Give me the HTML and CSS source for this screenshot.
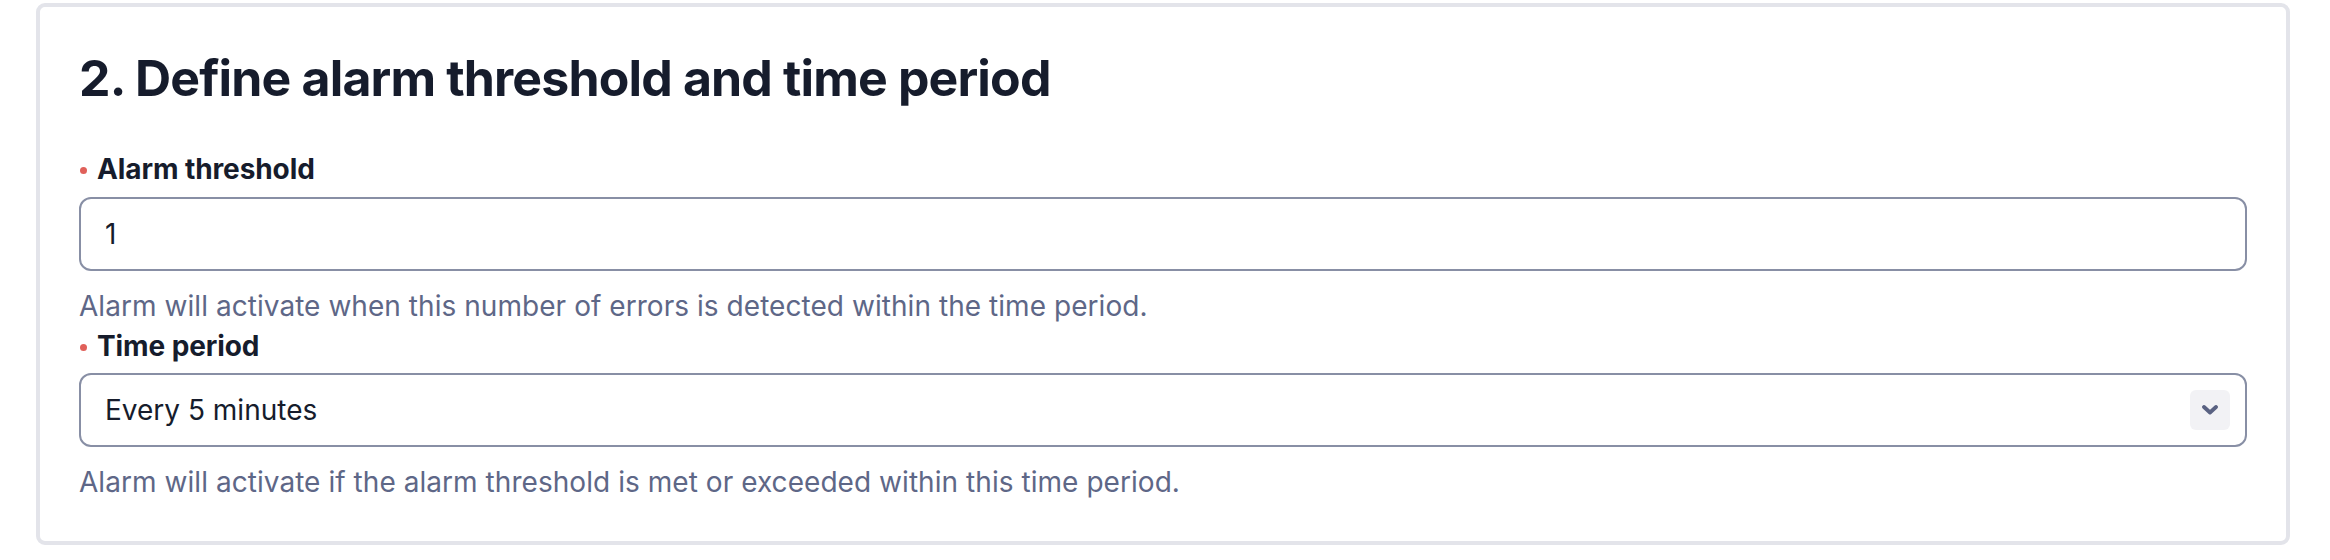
FILE: index.html
```html
<!DOCTYPE html>
<html lang="en">
<head>
<meta charset="utf-8">
<title>Define alarm threshold and time period</title>
<link rel="stylesheet" href="styles.css">
</head>
<body>
<div class="page">
  <section class="card">
    <h2 class="title">2. Define alarm threshold and time period</h2>
    <div class="field">
      <label class="label"><span class="req"></span>Alarm threshold</label>
      <div class="input"><span class="value">1</span></div>
      <p class="help">Alarm will activate when this number of errors is detected within the time period.</p>
    </div>
    <div class="field">
      <label class="label"><span class="req"></span>Time period</label>
      <div class="input select">
        <span class="value">Every 5 minutes</span>
        <span class="chev">
          <svg width="16" height="10" viewBox="0 0 16 10"><path d="M2 2 L8 7.5 L14 2" fill="none" stroke="#5a6282" stroke-width="3.8" stroke-linecap="round" stroke-linejoin="round"/></svg>
        </span>
      </div>
      <p class="help">Alarm will activate if the alarm threshold is met or exceeded within this time period.</p>
    </div>
  </section>
</div>
</body>
</html>
```

FILE: styles.css
```css
* { box-sizing: border-box; }
html, body { margin: 0; padding: 0; background: #ffffff; }
body {
  font-family: Inter, "Noto Sans", "Liberation Sans", sans-serif;
  color: #161c2c;
}
.page {
  padding: 3px 40px 0 36px;
}
.card {
  border: 4px solid #e3e4ea;
  border-radius: 9px;
  padding: 41px 39px 41px 39px;
  background: #fff;
}
.title {
  margin: 0;
  font-size: 50px;
  line-height: 60px;
  font-weight: 700;
  letter-spacing: -0.85px;
  color: #161c2c;
}
.field:first-of-type { margin-top: 43px; }
.label {
  display: flex;
  align-items: center;
  font-size: 28px;
  line-height: 36px;
  font-weight: 700;
  letter-spacing: -0.1px;
  color: #161c2c;
}
.req {
  width: 7px;
  height: 7px;
  border-radius: 50%;
  background: #e0605a;
  margin: 2px 10px 0 1px;
  flex: none;
}
.input {
  margin-top: 10px;
  height: 74px;
  border: 2px solid #888fa5;
  border-radius: 12px;
  display: flex;
  align-items: center;
  padding: 0 15px 0 24px;
  font-size: 28px;
  color: #161c2c;
}
.select { justify-content: space-between; margin-top: 9px; }
.chev {
  width: 40px;
  height: 40px;
  border-radius: 6px;
  background: #f2f2f5;
  display: flex;
  align-items: center;
  justify-content: center;
}
.help {
  margin: 17px 0 4px;
  font-size: 28px;
  line-height: 36px;
  letter-spacing: 0.05px;
  color: #5e6787;
}
.field:last-child .help { margin-bottom: 0; }
```
